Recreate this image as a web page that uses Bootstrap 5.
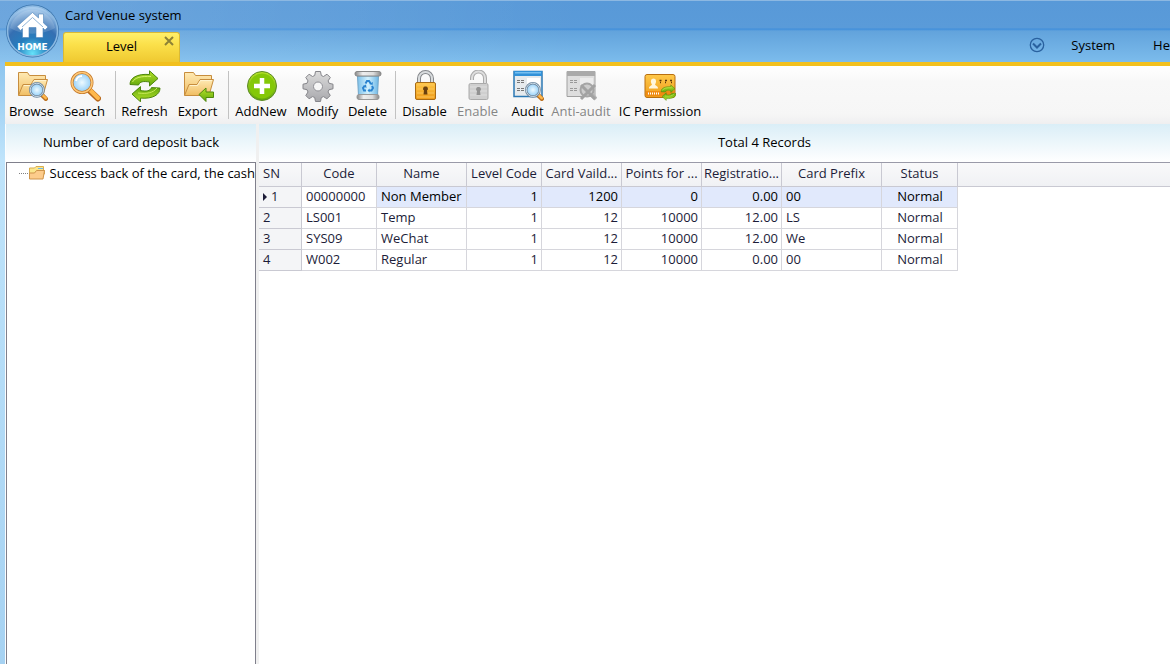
<!DOCTYPE html>
<html lang="en">
<head>
<meta charset="utf-8">
<meta name="viewport" content="width=device-width, initial-scale=1">
<title>Card Venue system</title>
<link href="https://cdn.jsdelivr.net/npm/bootstrap@5.3.0/dist/css/bootstrap.min.css" rel="stylesheet">
<style>
  body { font: 13px/20px "Open Sans", "Noto Sans", sans-serif; color: #000; background: linear-gradient(#8cc4ee 60px, #bfe4fb 160px, #a6d2f2); }
  button { color: inherit; }
  .app-head { background: linear-gradient(90deg, rgba(255,255,255,.12), rgba(255,255,255,0) 50%), linear-gradient(#5899d8, #5a9bd9 27px, #3f8edb 28px, #62a3dc 30px, #7cbcec); border-top: 1px solid #8cb8e2; }
  .title-row { height: 27px; padding: 4px 0 0 65px; }
  .nav-row { height: 34px; padding-left: 63px; }
  .home-btn { left: 5px; top: 3px; width: 56px; height: 56px; z-index: 2; }
  .doc-tab { width: 117px; height: 30px; line-height: 18px; background: linear-gradient(#fff06a, #fbe04a 40%, #efc930); border: 1px solid #d9b936; border-bottom: 0; border-radius: 3px 3px 0 0; }
  .tab-close { right: 5px; top: 3px; width: 10px; height: 10px; }
  .top-menu { gap: 38px; }
  .more-btn { margin-right: -12px; }
  .frame { padding-left: 5px; }
  .tool-strip { border-top: 4px solid #f2c01e; height: 62px; background: linear-gradient(#fff, #f8f8f8 16px, #f6f6f6 48px, #efeff0); }
  .tool-btn { width: 53px; padding: 4px 0 0; line-height: 18px; white-space: nowrap; }
  .tool-btn.w-tight { width: 47px; }
  .tool-btn.w-room { width: 60px; }
  .tool-btn.w-wide { width: 98px; }
  .tool-btn svg { width: 32px; height: 32px; }
  .tool-btn:disabled { color: #858585; }
  .tool-sep { width: 1px; height: 48px; margin: 5px 2px 0 4px; background: #c2c2c2; }
  .work { background: #f0f0f0; gap: 3px; }
  .side-pane { width: 251px; padding-left: 1px; background: #fbfdfe; }
  .pane-caption { height: 38px; line-height: 36px; background: linear-gradient(#daeef7, #fff); }
  .main-caption { padding-left: 100px; }
  .tree { border: 1px solid #80808c; border-bottom: 0; background: #fff; padding-left: 12px; }
  .tree a { height: 20px; }
  .tree-line { width: 10px; border-top: 1px dotted #808080; }
  .grid-pane { background: linear-gradient(#f9f9fa, #f0f1f4) 0 0 / 100% 23px no-repeat #fff; border-top: 1px solid #9a9aa8; }
  .head-rule { height: 24px; border-bottom: 1px solid #c9c9d2; }
  .records { width: 699px; margin-top: -24px; table-layout: fixed; border-collapse: separate; border-spacing: 0; line-height: 19px; color: #1c1c38; }
  .records th, .records td { font-weight: 400; padding: 0 3px 1px 4px; border: solid #d6d6dc; border-width: 0 1px 1px 0; height: 21px; overflow: hidden; white-space: nowrap; }
  .records thead th { height: 24px; padding: 0 0 2px; text-align: center; border-color: #c9c9d2; }
  .records tbody th { background: #f4f5f7; border-color: #c9c9d2; }
  .records thead th:first-child { text-align: left; padding-left: 4px; }
  .records .picked { background: #e1e9fc; color: #000; }
  .row-mark { display: inline-block; border: solid transparent; border-width: 4px 0 4px 4px; border-left-color: #1c1c38; margin-right: 4px; }
</style>
</head>
<body class="vh-100 overflow-hidden d-flex flex-column">
<svg width="0" height="0" class="position-absolute" aria-hidden="true">
  <defs>
    <linearGradient id="gFolder" x2="0" y2="1"><stop stop-color="#ffeab4"/><stop offset="1" stop-color="#f0bd62"/></linearGradient>
    <linearGradient id="gGreen" x2="0" y2="1"><stop stop-color="#b6e22a"/><stop offset="1" stop-color="#62a80c"/></linearGradient>
    <linearGradient id="gGrey" x2="0" y2="1"><stop stop-color="#dcdcdc"/><stop offset="1" stop-color="#a8a8ac"/></linearGradient>
    <linearGradient id="gGold" x2="0" y2="1"><stop stop-color="#ffc94a"/><stop offset="1" stop-color="#ee9a18"/></linearGradient>
    <radialGradient id="gLens"><stop stop-color="#eefaff"/><stop offset="1" stop-color="#8fcdf8"/></radialGradient>
    <linearGradient id="gBin"><stop stop-color="#7cc0ea"/><stop offset=".5" stop-color="#d2f1fe"/><stop offset="1" stop-color="#6db7e6"/></linearGradient>
    <linearGradient id="gMetal"><stop stop-color="#888"/><stop offset=".3" stop-color="#eee"/><stop offset=".7" stop-color="#ddd"/><stop offset="1" stop-color="#888"/></linearGradient>
    <radialGradient id="gHome" cy=".95" r=".9"><stop stop-color="#65e2fa"/><stop offset=".35" stop-color="#267dbd"/><stop offset=".65" stop-color="#356fb2"/><stop offset="1" stop-color="#a6cbed"/></radialGradient>
    <symbol id="folder" viewBox="0 0 32 32">
      <path d="M2.500 25V2.500h9l2 3h16v4h-3v15z" fill="url(#gFolder)" stroke="#c78d3e"/>
      <path d="M2.500 25.500 7 14.500h8l3-5h13.500l-4.500 16z" fill="url(#gFolder)" stroke="#c78d3e"/>
      <path d="M8 15.500h7.500l3-5H30" fill="none" stroke="#fff3cf"/>
    </symbol>
    <symbol id="lens" viewBox="0 0 32 32">
      <path d="m20 20 9 8.500" stroke="#b9691c" stroke-width="6" stroke-linecap="round"/>
      <path d="m21 20 8 8" stroke="#ffb84b" stroke-width="4" stroke-linecap="round"/>
      <circle cx="13" cy="12.500" r="10" fill="url(#gLens)" stroke="#c67b2c" stroke-width="3"/>
      <circle cx="13" cy="12.500" r="10" fill="none" stroke="#ffc978" stroke-width="1.500"/>
      <path d="M7 11a6 6 0 0 1 6-5" stroke="#fff" stroke-width="2" fill="none"/>
    </symbol>
    <symbol id="lensSmall" viewBox="0 0 18 18">
      <path d="m12.500 12.500 3.500 3.500" stroke="#bb7121" stroke-width="4" stroke-linecap="round"/>
      <path d="m13 12.500 3 3" stroke="#ffb84b" stroke-width="2.200" stroke-linecap="round"/>
      <circle cx="8" cy="8" r="6" fill="url(#gLens)" stroke="#7089a0" stroke-width="2.200"/>
      <circle cx="8" cy="8" r="6" fill="none" stroke="#c9d9e5" stroke-width=".9"/>
    </symbol>
    <symbol id="cycle" viewBox="0 0 32 32">
      <path id="arrowTop" d="M1 14.500C1 8 8 3.500 20.500 4.500V.8l8.500 7.700-8.500 7.500v-4C14 11 11 11.500 9.500 15z" fill="url(#gGreen)" stroke="#4c850c" stroke-linejoin="round"/>
      <path d="M3.500 12C6 7.500 12 6 22 6.500" fill="none" stroke="#d3f16b"/>
      <use href="#arrowTop" transform="rotate(180 16 16.300)"/>
      <path d="M9 23c9 1 15 0 19-5" fill="none" stroke="#cdec5c"/>
    </symbol>
    <symbol id="winPage" viewBox="0 0 32 32">
      <path d="M2 1.500h28v25H2z" fill="#e6eaed" stroke="#2b78b4" stroke-width="1.500"/>
      <path d="M2 1h28v5H2z" fill="#3191d8"/><path d="M3 2h26v1.500H3z" fill="#76bff0"/>
      <path d="M15 8h13v11H15z" fill="#fff"/>
      <path d="M5 10.500h3m1 0h3m-7 2h3m1 0h3m-7 6h3m1 0h3m-7 2h3m1 0h3" stroke="#777"/>
    </symbol>
  </defs>
</svg>

<header class="app-head position-relative">
  <a href="#" class="home-btn position-absolute" aria-label="Home">
    <svg viewBox="0 0 56 56" width="56" height="56">
      <circle cx="27.500" cy="27" r="26.500" fill="#3b75ad"/>
      <circle cx="27.500" cy="27" r="25" fill="url(#gHome)" stroke="#8bb9e2" stroke-width="1.500"/>
      <path d="M5 24a23 23 0 0 1 45 0c-12 7-32 8-45 0z" fill="#fff" opacity=".15"/>
      <path d="m12 22.500 15.500-14 6 5.500v-4h5v9l4.500 4-3 3-2-2v9.500H31v-10h-7v10h-6.500V24.500l-2 2z" fill="#fff" stroke="#4d85bb" stroke-width=".6"/>
      <path d="m17 23 10.500-9.500L38 23" fill="none" stroke="#8eb4d8"/>
      <text x="27.500" y="46" text-anchor="middle" font-family="DejaVu Sans" font-weight="700" font-size="9" fill="#fff">HOME</text>
    </svg>
  </a>
  <div class="title-row">Card Venue system</div>
  <div class="nav-row d-flex align-items-end justify-content-between">
    <div class="doc-tab position-relative text-center">
      <a href="#" class="d-block text-reset text-decoration-none pt-1">Level</a>
      <button type="button" class="tab-close position-absolute border-0 bg-transparent p-0 d-flex" aria-label="Close tab">
        <svg viewBox="0 0 10 10" width="10" height="10"><path d="m1 1 8 8m0-8-8 8" stroke="#8d8236" stroke-width="2"/></svg>
      </button>
    </div>
    <nav class="top-menu d-flex align-self-center align-items-center">
      <button type="button" class="more-btn border-0 bg-transparent p-0 d-flex" aria-label="More">
        <svg viewBox="0 0 16 16" width="16" height="16" fill="none" stroke="#29619f"><circle cx="8" cy="8" r="6.700" stroke-width="1.300"/><path d="m4 6.500 4 4 4-4" stroke-width="2"/></svg>
      </button>
      <a href="#" class="text-reset text-decoration-none">System</a>
      <a href="#" class="text-reset text-decoration-none">He</a>
    </nav>
  </div>
</header>

<div class="frame flex-grow-1 d-flex flex-column">
  <div class="tool-strip d-flex" role="toolbar" aria-label="Records">
    <button type="button" class="tool-btn border-0 bg-transparent d-flex flex-column align-items-center">
      <svg><use href="#folder" width="32" height="32"/><use href="#lensSmall" x="12" y="11" width="20" height="20"/></svg>Browse</button>
    <button type="button" class="tool-btn border-0 bg-transparent d-flex flex-column align-items-center">
      <svg><use href="#lens" width="32" height="32"/></svg>Search</button>
    <div class="tool-sep"></div>
    <button type="button" class="tool-btn border-0 bg-transparent d-flex flex-column align-items-center">
      <svg><use href="#cycle" width="32" height="32"/></svg>Refresh</button>
    <button type="button" class="tool-btn border-0 bg-transparent d-flex flex-column align-items-center">
      <svg viewBox="0 0 32 32"><use href="#folder" width="32" height="32"/><path d="m17 24.500 7-6.500v4h7.500v5.500H24v4z" fill="url(#gGreen)" stroke="#4f870e"/></svg>Export</button>
    <div class="tool-sep"></div>
    <button type="button" class="tool-btn w-room border-0 bg-transparent d-flex flex-column align-items-center">
      <svg viewBox="0 0 32 32"><circle cx="17" cy="16" r="14.500" fill="url(#gGreen)" stroke="#5c8a25"/><circle cx="17" cy="16" r="12.500" fill="#84c808"/><path d="M17 8v16M9 16h16" stroke="#fff" stroke-width="4.500"/></svg>AddNew</button>
    <button type="button" class="tool-btn border-0 bg-transparent d-flex flex-column align-items-center">
      <svg viewBox="0 0 32 32"><path d="M13.500 1.500h5l.8 4 2.200 1L25 4.200l3.300 3.300-2.200 3.400 1 2.400 3.900.9v4.600l-4 .9-1 2.300 2.300 3.500-3.400 3.300-3.400-2.200-2.200 1-.8 3.900h-5l-.8-4-2.200-.9-3.400 2.200-3.300-3.300L6 22l-1-2.300-4-.9v-4.600l4-.9 1-2.400-2.200-3.400 3.300-3.300 3.400 2.300 2.200-1z" fill="url(#gGrey)" stroke="#85858a"/><circle cx="16" cy="16.500" r="4.500" fill="#f7f7f7" stroke="#909095"/></svg>Modify</button>
    <button type="button" class="tool-btn w-tight border-0 bg-transparent d-flex flex-column align-items-center">
      <svg viewBox="0 0 32 32"><path d="m5.500 6 1 20h19l1-20z" fill="url(#gBin)" stroke="#72a6c8"/><rect x="3" y="1.500" width="26" height="4.500" rx="2" fill="url(#gMetal)" stroke="#888"/><rect x="5" y="24.500" width="22" height="5" rx="2" fill="url(#gMetal)" stroke="#999"/><g fill="none" stroke="#2b84d0" stroke-width="2"><path d="m13.500 13.500 1.500-2.500h2l2 3M20 16l1 2-1.500 2.500H17M14 20.500h-2L11 18l1.500-2"/></g><path d="m17.500 14 3 1 .5-3zM17.500 18.500 15.500 20.500l2 2zM11 16l3-1.500.5 3.500z" fill="#2b84d0"/></svg>Delete</button>
    <div class="tool-sep"></div>
    <button type="button" class="tool-btn border-0 bg-transparent d-flex flex-column align-items-center">
      <svg viewBox="0 0 32 32"><path d="M10 14V8.500a6.500 6.500 0 0 1 13 0V14" fill="none" stroke="#85888c" stroke-width="4"/><path d="M10 14V8.500a6.500 6.500 0 0 1 13 0V14" fill="none" stroke="#d9dcde" stroke-width="2"/><rect x="6.500" y="12.500" width="20" height="17" rx="1.500" fill="url(#gGold)" stroke="#a86b16"/><path d="M8 15h17M8 19h17M8 23h17M8 27h17" stroke="#fbc65c"/><path d="M16.500 16.500a2.200 2.200 0 0 1 1.500 4l.5 4h-4l.5-4a2.200 2.200 0 0 1 1.500-4z" fill="#69400f"/></svg>Disable</button>
    <button type="button" disabled class="tool-btn border-0 bg-transparent d-flex flex-column align-items-center">
      <svg viewBox="0 0 32 32"><path d="M23 13V8a6.500 6.500 0 0 0-13 0v2" fill="none" stroke="#aaa" stroke-width="4"/><path d="M23 13V8a6.500 6.500 0 0 0-13 0v2" fill="none" stroke="#dedede" stroke-width="2"/><rect x="7" y="13.500" width="19" height="16" rx="1.500" fill="#cfcfcf" stroke="#aaa"/><path d="M8 17h17M8 21h17M8 25h17" stroke="#dedede"/><path d="M16.500 17a2.200 2.200 0 0 1 1.500 4l.5 4h-4l.5-4a2.200 2.200 0 0 1 1.500-4z" fill="#929292"/></svg>Enable</button>
    <button type="button" class="tool-btn w-tight border-0 bg-transparent d-flex flex-column align-items-center">
      <svg viewBox="0 0 32 32"><use href="#winPage" width="32" height="32"/><use href="#lensSmall" x="12" y="11" width="20" height="20"/></svg>Audit</button>
    <button type="button" disabled class="tool-btn w-room border-0 bg-transparent d-flex flex-column align-items-center">
      <svg viewBox="0 0 32 32"><path d="M2 1.500h28v25H2z" fill="#dedede" stroke="#a0a0a0"/><path d="M2 1h28v5H2z" fill="#aaa"/><path d="M15 8h13v11H15z" fill="#ececec"/><path d="M5 10.500h3m1 0h3m-7 2h3m1 0h3m-7 6h3m1 0h3m-7 2h3m1 0h3" stroke="#999"/><path d="m27 25 4 4" stroke="#b5b5b5" stroke-width="4"/><circle cx="22" cy="20" r="6.500" fill="#ccc" stroke="#a5a5a5" stroke-width="2"/><path d="m16 15 14 14m0-14L16 29" stroke="#a2a2a2" stroke-width="3"/></svg>Anti-audit</button>
    <button type="button" class="tool-btn w-wide border-0 bg-transparent d-flex flex-column align-items-center">
      <svg viewBox="0 0 32 32"><rect x="1" y="4.500" width="30" height="23" rx="2" fill="url(#gGold)" stroke="#b96f10"/><path d="M2 21h28v5H2z" fill="#f08c12"/><path d="M5 18.500c0-3 2-2 3-4-2-3-1-6 1.500-6s3.500 3 1.500 6c1 2 3 1 3 4z" fill="#fff6dd"/><path d="M15.500 10.500h2m3.500 0h2m3 0h2M16 12.500h1m4 0h1m5 0h1" stroke="#5f3909" stroke-width="1.500"/><path d="M4 23.500h11" stroke="#fff" stroke-width="2" stroke-dasharray="1 1"/><use href="#cycle" x="16.500" y="14" width="16" height="17"/></svg>IC Permission</button>
  </div>

  <div class="work flex-grow-1 d-flex">
    <aside class="side-pane d-flex flex-column flex-shrink-0">
      <div class="pane-caption text-center">Number of card deposit back</div>
      <div class="tree flex-grow-1">
        <a href="#" class="d-flex align-items-center text-reset text-decoration-none text-nowrap">
          <span class="tree-line"></span>
          <svg class="me-1 flex-shrink-0" viewBox="0 0 18 16" width="18" height="16"><path d="M1.500 13V3h5L8 1.500h7.500v4h1V9z" fill="#fbe68c" stroke="#d8ad4d"/><path d="M10 3.500h5" stroke="#70b7e8"/><path d="M1.500 14V8h5l2-2.500h8L15 14z" fill="#fdcc8b" stroke="#cf944b"/></svg>
          Success back of the card, the cash
        </a>
      </div>
    </aside>
    <main class="flex-grow-1 d-flex flex-column">
      <div class="pane-caption main-caption text-center">Total 4 Records</div>
      <div class="grid-pane flex-grow-1">
        <div class="head-rule"></div>
        <table class="records">
          <colgroup><col style="width:43px"><col style="width:75px"><col style="width:90px"><col style="width:75px"><col style="width:80px"><col style="width:80px"><col style="width:80px"><col style="width:100px"><col style="width:76px"></colgroup>
          <thead>
            <tr><th>SN</th><th>Code</th><th>Name</th><th>Level Code</th><th>Card Vaild...</th><th>Points for ...</th><th>Registratio...</th><th>Card Prefix</th><th>Status</th></tr>
          </thead>
          <tbody>
            <tr><th><span class="row-mark"></span>1</th><td>00000000</td><td class="picked">Non Member</td><td class="picked text-end">1</td><td class="picked text-end">1200</td><td class="picked text-end">0</td><td class="picked text-end">0.00</td><td class="picked">00</td><td class="picked text-center">Normal</td></tr>
            <tr><th>2</th><td>LS001</td><td>Temp</td><td class="text-end">1</td><td class="text-end">12</td><td class="text-end">10000</td><td class="text-end">12.00</td><td>LS</td><td class="text-center">Normal</td></tr>
            <tr><th>3</th><td>SYS09</td><td>WeChat</td><td class="text-end">1</td><td class="text-end">12</td><td class="text-end">10000</td><td class="text-end">12.00</td><td>We</td><td class="text-center">Normal</td></tr>
            <tr><th>4</th><td>W002</td><td>Regular</td><td class="text-end">1</td><td class="text-end">12</td><td class="text-end">10000</td><td class="text-end">0.00</td><td>00</td><td class="text-center">Normal</td></tr>
          </tbody>
        </table>
      </div>
    </main>
  </div>
</div>
<script src="https://cdn.jsdelivr.net/npm/bootstrap@5.3.0/dist/js/bootstrap.bundle.min.js"></script>
</body>
</html>
